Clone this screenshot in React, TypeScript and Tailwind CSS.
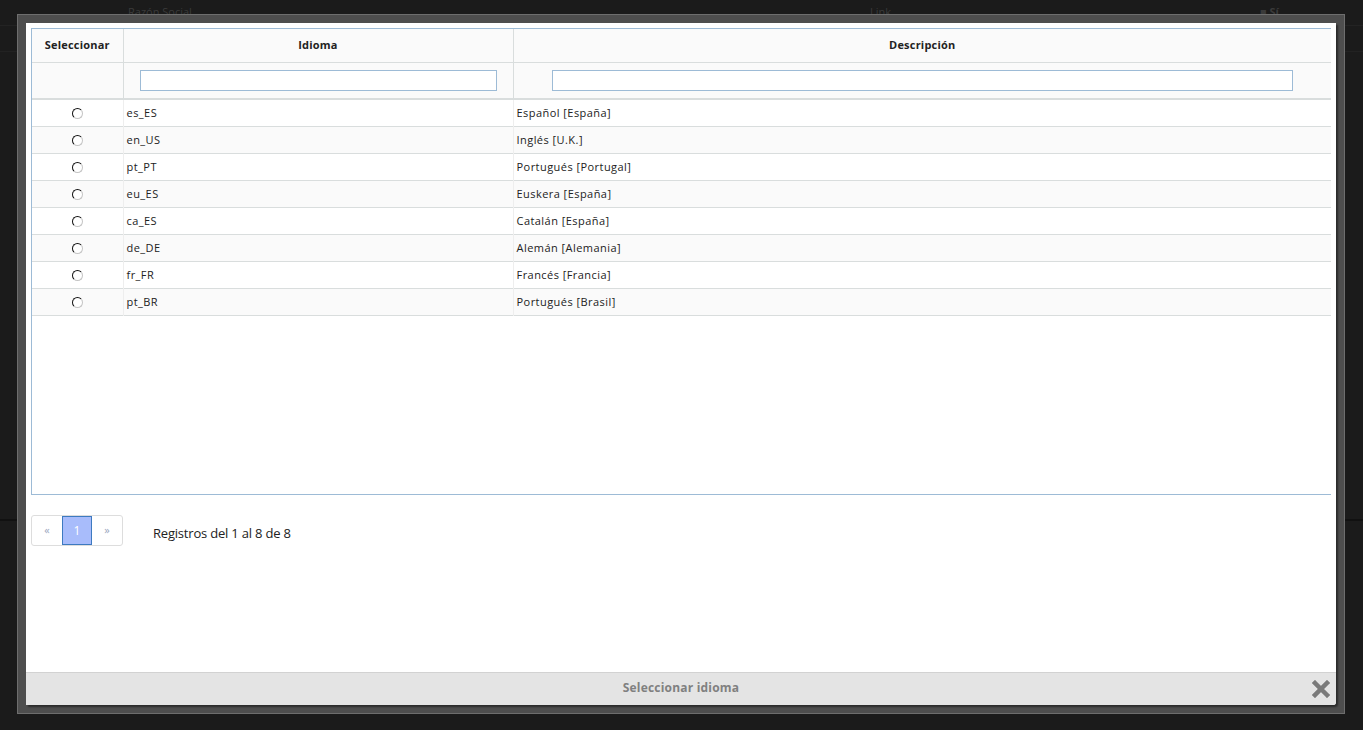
import { useState } from "react";

const IDIOMAS = [
  { code: "es_ES", desc: "Español [España]" },
  { code: "en_US", desc: "Inglés [U.K.]" },
  { code: "pt_PT", desc: "Portugués [Portugal]" },
  { code: "eu_ES", desc: "Euskera [España]" },
  { code: "ca_ES", desc: "Catalán [España]" },
  { code: "de_DE", desc: "Alemán [Alemania]" },
  { code: "fr_FR", desc: "Francés [Francia]" },
  { code: "pt_BR", desc: "Portugués [Brasil]" },
];

function CloseIcon() {
  return (
    <svg width="18" height="18" viewBox="0 0 18 18">
      <path d="M3 3 L15 15 M15 3 L3 15" stroke="#7a7a7a" strokeWidth="4.5" strokeLinecap="square" />
    </svg>
  );
}

export default function App() {
  const [selected, setSelected] = useState<string | null>(null);
  const [idioma, setIdioma] = useState("");
  const [desc, setDesc] = useState("");

  const rows = IDIOMAS.filter(
    (r) =>
      r.code.toLowerCase().includes(idioma.toLowerCase()) &&
      r.desc.toLowerCase().includes(desc.toLowerCase())
  );

  return (
    <div
      className="relative w-full h-[730px] overflow-hidden bg-[#1b1b1b] text-[#222]"
      style={{ fontFamily: '"Open Sans", "Noto Sans", sans-serif' }}
    >
      {/* page behind the overlay */}
      <div className="flex flex-col">
        <div className="flex h-[26px] items-center border-b border-[#232323] text-[11px] text-[#3a3a3a]">
          <span className="ml-[128px] w-[742px]">Razón Social</span>
          <span className="w-[390px]">Link</span>
          <span className="font-bold">■ Sí</span>
        </div>
        <div className="h-[26px] border-b border-[#222]" />
        <div className="h-[467px]" />
        <div className="h-[2px] bg-[#111]" />
      </div>

      {/* modal frame */}
      <div className="absolute left-[17px] top-[14px] w-[1328px] h-[700px] bg-[#4e4e4e] border border-[#6e6e6e] p-[8px]">
        <div className="flex flex-col h-[682px] bg-white shadow-[2px_2px_2px_rgba(0,0,0,0.45)] rounded-br-[3px] overflow-hidden">
          <div className="flex-1 px-[5px] pt-[5px]">
            <div className="h-[467px] border-l border-t border-b border-[#9dbbd6]">
              <table className="w-full table-fixed border-collapse text-[11px]">
                <colgroup>
                  <col className="w-[91px]" />
                  <col className="w-[390px]" />
                  <col />
                </colgroup>
                <thead>
                  <tr className="h-[33px] bg-[#fafafa]">
                    <th className="border-r border-[#d9dddd] font-bold text-[11px] tracking-[0.2px] text-[#222]">Seleccionar</th>
                    <th className="border-r border-[#d9dddd] font-bold text-[11px] tracking-[0.2px] text-[#222]">Idioma</th>
                    <th className="font-bold text-[11px] tracking-[0.2px] text-[#222]">Descripción</th>
                  </tr>
                  <tr className="h-[37px] bg-[#fafafa] border-t border-b-2 border-[#d9dddd]">
                    <th className="border-r border-[#d9dddd]" />
                    <th className="border-r border-[#d9dddd] px-[16px]">
                      <input
                        value={idioma}
                        onChange={(e) => setIdioma(e.target.value)}
                        className="block w-full h-[21px] bg-white border border-[#9dbbd6] outline-none px-1 text-[11px]"
                      />
                    </th>
                    <th className="pl-[38px] pr-[38px]">
                      <input
                        value={desc}
                        onChange={(e) => setDesc(e.target.value)}
                        className="block w-full h-[21px] bg-white border border-[#9dbbd6] outline-none px-1 text-[11px]"
                      />
                    </th>
                  </tr>
                </thead>
                <tbody>
                  {rows.map((r, i) => (
                    <tr
                      key={r.code}
                      className={`h-[27px] border-b border-[#d9dddd] tracking-[0.45px] ${i % 2 === 1 ? "bg-[#fafafa]" : "bg-white"}`}
                    >
                      <td className="text-center border-r border-[#eeeeee]">
                        <input
                          type="radio"
                          name="idioma"
                          checked={selected === r.code}
                          onChange={() => setSelected(r.code)}
                          className="appearance-none inline-block w-[11px] h-[11px] align-middle m-0 rounded-full border border-t-[#111] border-l-[#111] border-r-[#c4c4c4] border-b-[#c4c4c4] bg-white checked:bg-[radial-gradient(circle,#222_35%,#fff_40%)]"
                        />
                      </td>
                      <td className="pl-[3px] pt-[1px] border-r border-[#eeeeee]">{r.code}</td>
                      <td className="pl-[3px] pt-[1px]">{r.desc}</td>
                    </tr>
                  ))}
                </tbody>
              </table>
            </div>

            <div className="flex items-center mt-[20px]">
              <div className="flex h-[31px] border border-[#dddddd] rounded-[3px] text-[11px]">
                <button className="w-[30px] text-[#9aa6c0]">«</button>
                <button className="w-[30px] bg-[#a8bcfb] border border-[#3d7ac0] text-white text-[12px]">1</button>
                <button className="w-[30px] text-[#9aa6c0]">»</button>
              </div>
              <span className="ml-[30px] pt-[7px] text-[13px] tracking-[-0.2px] text-[#222]">Registros del 1 al 8 de 8</span>
            </div>
          </div>

          <div className="relative flex items-center justify-center h-[33px] bg-[#e4e4e4] border-t border-[#d2d2d2]">
            <span className="font-bold text-[12px] tracking-[0.2px] text-[#808080] -mt-[2px]">Seleccionar idioma</span>
            <button className="absolute right-[6px] top-[7px]">
              <CloseIcon />
            </button>
          </div>
        </div>
      </div>
    </div>
  );
}
